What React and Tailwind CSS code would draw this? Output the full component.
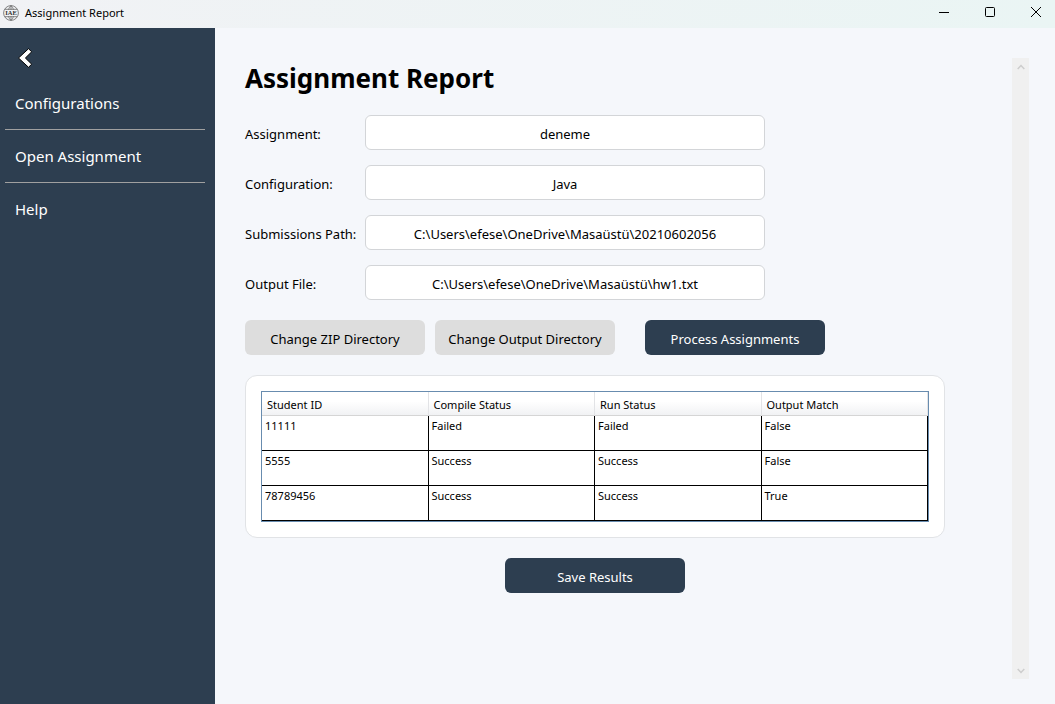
const fields = [
  { id: 'assignment', label: 'Assignment:', value: 'deneme' },
  { id: 'configuration', label: 'Configuration:', value: 'Java' },
  { id: 'submissions', label: 'Submissions Path:', value: 'C:\\Users\\efese\\OneDrive\\Masaüstü\\20210602056' },
  { id: 'output', label: 'Output File:', value: 'C:\\Users\\efese\\OneDrive\\Masaüstü\\hw1.txt' },
];

const columns = ['Student ID', 'Compile Status', 'Run Status', 'Output Match'];

const rows = [
  ['11111', 'Failed', 'Failed', 'False'],
  ['5555', 'Success', 'Success', 'False'],
  ['78789456', 'Success', 'Success', 'True'],
];

function GlobeLogo() {
  return (
    <svg className="size-4" viewBox="0 0 16 16" fill="none" stroke="#666" strokeWidth="0.8" aria-hidden="true">
      <circle cx="8" cy="8" r="7.4" />
      <path d="M8 .7v4M8 11.300v4M5.600 4.700C6 3 6.800 1.400 8 .7c1.200.7 2 2.300 2.400 4M5.600 11.300c.4 1.700 1.200 3.300 2.400 4 1.200-.7 2-2.300 2.400-4M2 4.300h12M2 11.700h12" />
      <text x="8" y="10.300" textAnchor="middle" fontSize="6.500" fontWeight="700" fill="#333" stroke="none" fontFamily="Liberation Serif, serif">IAE</text>
    </svg>
  );
}

function TitleBar() {
  return (
    <header className="flex h-7 items-center bg-linear-to-r from-[#f1f2f5] to-[#eaf5f4] pl-[3px]">
      <div className="pb-[3px]">
        <GlobeLogo />
      </div>
      <span className="grow pb-0.5 pl-1.5 text-[11px] leading-4">Assignment Report</span>
      <div className="flex gap-[34px] pr-[13px] pb-1">
        <button aria-label="Minimize" className="flex h-6 items-center">
          <svg className="size-3" viewBox="0 0 12 12" stroke="#000" fill="none"><path d="M1 6.500h10" /></svg>
        </button>
        <button aria-label="Maximize" className="flex h-6 items-center">
          <svg className="size-3" viewBox="0 0 12 12" stroke="#000" fill="none"><rect x="1.500" y="1.500" width="9" height="9" rx="1" /></svg>
        </button>
        <button aria-label="Close" className="flex h-6 items-center">
          <svg className="size-3" viewBox="0 0 12 12" stroke="#000" fill="none"><path d="M1 1l10 10M11 1L1 11" /></svg>
        </button>
      </div>
    </header>
  );
}

function Sidebar() {
  const item = 'block w-full px-2.5 text-left text-[15px] leading-[52px]';
  return (
    <nav className="w-[215px] shrink-0 bg-[#2d3e50] pt-5 pr-2.5 pl-[5px] text-white">
      <button aria-label="Back" className="ml-3 block">
        <svg className="h-5 w-4" viewBox="0 0 16 20" fill="#fff" stroke="#000" strokeWidth="1" strokeLinejoin="round">
          <path d="M1.500 10L11.500.7l3.200 3.100-6.300 6.200 6.300 6.200-3.200 3.100z" />
        </svg>
      </button>
      <div className="mt-[9px] divide-y divide-[#a0a0a0]">
        <button className={item}>Configurations</button>
        <button className={item}>Open Assignment</button>
        <button className={item}>Help</button>
      </div>
    </nav>
  );
}

function ResultsTable() {
  return (
    <div className="rounded-xl border border-[#e1e3e6] bg-white p-[15px]">
      <table className="w-full table-fixed border-separate border-spacing-0 border border-[#688caf] text-[11px] leading-4">
        <thead>
          <tr>
            {columns.map((name) => (
              <th key={name} className="h-6 border-r border-b border-r-[#e2e3e6] border-b-[#d5d5d5] bg-linear-to-b from-white from-40% to-[#f1f2f4] px-[5px] pt-0.5 text-left font-normal">
                {name}
              </th>
            ))}
          </tr>
        </thead>
        <tbody>
          {rows.map((row) => (
            <tr key={row[0]}>
              {row.map((cell, i) => (
                <td key={i} className="h-[35px] border-r border-b border-black px-[3px] pt-0.5 align-top">{cell}</td>
              ))}
            </tr>
          ))}
        </tbody>
      </table>
    </div>
  );
}

function ScrollTrack() {
  return (
    <div className="flex w-[17px] shrink-0 flex-col items-center justify-between bg-[#f0f0f0] pt-1.5 pb-1 text-[#cdcdcd]" aria-hidden="true">
      <svg className="size-2" viewBox="0 0 8 8" fill="none" stroke="currentColor" strokeWidth="1.500"><path d="M.7 5L4 1.500l3.300 3.500" /></svg>
      <svg className="size-2" viewBox="0 0 8 8" fill="none" stroke="currentColor" strokeWidth="1.500"><path d="M.7 2L4 5.500 7.300 2" /></svg>
    </div>
  );
}

export default function App() {
  const button = 'h-[35px] w-[180px] rounded-md pt-0.5';
  return (
    <div className="flex min-h-screen flex-col bg-[#f5f7fb] font-['Noto_Sans','Open_Sans',sans-serif] text-black">
      <TitleBar />
      <div className="flex grow">
        <Sidebar />
        <main className="flex grow justify-between pt-[30px] pr-[26px] pb-[25px] pl-[30px] text-[13px] leading-5">
          <div className="w-[700px]">
            <h1 className="text-[26px] leading-10 font-bold">Assignment Report</h1>
            <form className="mt-[17px] flex flex-col gap-[15px]">
              {fields.map((field) => (
                <div key={field.id} className="flex items-center">
                  <label htmlFor={field.id} className="w-[120px] shrink-0 pt-0.5">{field.label}</label>
                  <input id={field.id} readOnly defaultValue={field.value} className="h-[35px] w-[400px] rounded-md border border-[#d3d5d8] bg-white pt-0.5 text-center" />
                </div>
              ))}
            </form>
            <div className="mt-5 mb-5 flex gap-2.5">
              <button className={`${button} bg-[#dddddd]`}>Change ZIP Directory</button>
              <button className={`${button} bg-[#dddddd]`}>Change Output Directory</button>
              <button className={`${button} ml-5 bg-[#2d3e50] text-white`}>Process Assignments</button>
            </div>
            <ResultsTable />
            <div className="mt-5 flex justify-center">
              <button className={`${button} bg-[#2d3e50] text-white`}>Save Results</button>
            </div>
          </div>
          <ScrollTrack />
        </main>
      </div>
    </div>
  );
}
